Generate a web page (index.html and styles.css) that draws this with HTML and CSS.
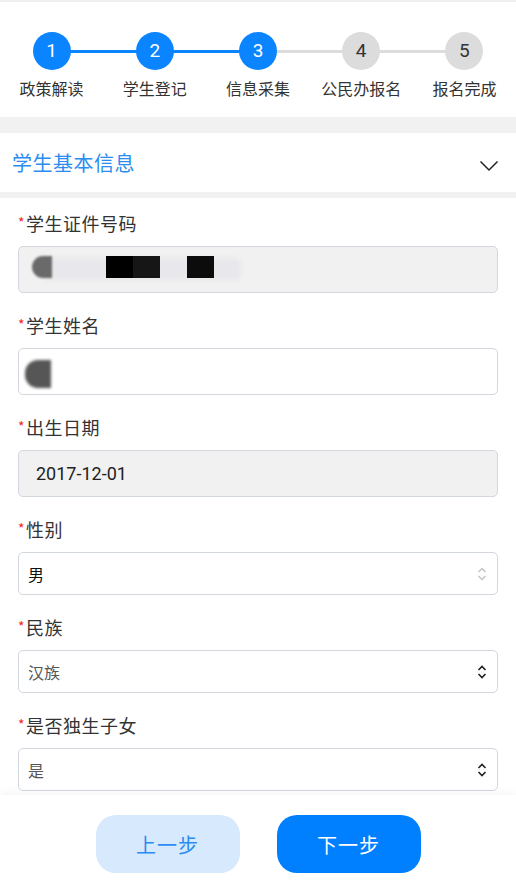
FILE: index.html
```html
<!DOCTYPE html>
<html lang="zh">
<head>
<meta charset="utf-8">
<link rel="stylesheet" href="styles.css">
</head>
<body>
<div class="page">
  <div class="topline"></div>
  <div class="steps">
    <div class="step done"><div class="track"><span class="bar right on"></span><span class="circle">1</span></div><div class="slabel">政策解读</div></div>
    <div class="step done"><div class="track"><span class="bar left on"></span><span class="bar right on"></span><span class="circle">2</span></div><div class="slabel">学生登记</div></div>
    <div class="step done"><div class="track"><span class="bar left on"></span><span class="bar right"></span><span class="circle">3</span></div><div class="slabel">信息采集</div></div>
    <div class="step"><div class="track"><span class="bar left"></span><span class="bar right"></span><span class="circle">4</span></div><div class="slabel">公民办报名</div></div>
    <div class="step"><div class="track"><span class="bar left"></span><span class="circle">5</span></div><div class="slabel">报名完成</div></div>
  </div>
  <div class="band"></div>
  <div class="section-head">
    <span class="section-title">学生基本信息</span>
    <svg class="chev" width="20" height="12" viewBox="0 0 20 12"><path d="M1.5 1.5 L10 10 L18.5 1.5" fill="none" stroke="#222" stroke-width="1.5"/></svg>
  </div>
  <div class="band thin"></div>
  <div class="form">
    <div class="field first">
      <div class="label"><span class="req">*</span>学生证件号码</div>
      <div class="input readonly">
        <span class="mask m5"></span><span class="mask m1"></span><span class="mask m2"></span><span class="mask m3"></span><span class="mask m4"></span>
      </div>
    </div>
    <div class="field">
      <div class="label"><span class="req">*</span>学生姓名</div>
      <div class="input"><span class="mask n1"></span></div>
    </div>
    <div class="field">
      <div class="label"><span class="req">*</span>出生日期</div>
      <div class="input readonly date">2017-12-01</div>
    </div>
    <div class="field">
      <div class="label"><span class="req">*</span>性别</div>
      <div class="select dark"><span>男</span>
        <svg class="arrows" width="10" height="14" viewBox="0 0 10 14"><path d="M1.5 5 L5 1.5 L8.5 5 M1.5 9 L5 12.5 L8.5 9" fill="none" stroke="#c4c4c4" stroke-width="1.5"/></svg>
      </div>
    </div>
    <div class="field">
      <div class="label"><span class="req">*</span>民族</div>
      <div class="select"><span>汉族</span>
        <svg class="arrows" width="10" height="14" viewBox="0 0 10 14"><path d="M1.5 5 L5 1.5 L8.5 5 M1.5 9 L5 12.5 L8.5 9" fill="none" stroke="#222" stroke-width="1.6"/></svg>
      </div>
    </div>
    <div class="field">
      <div class="label"><span class="req">*</span>是否独生子女</div>
      <div class="select"><span>是</span>
        <svg class="arrows" width="10" height="14" viewBox="0 0 10 14"><path d="M1.5 5 L5 1.5 L8.5 5 M1.5 9 L5 12.5 L8.5 9" fill="none" stroke="#222" stroke-width="1.6"/></svg>
      </div>
    </div>
  </div>
  <div class="footer">
    <button class="btn prev">上一步</button>
    <button class="btn next">下一步</button>
  </div>
</div>
</body>
</html>
```
FILE: styles.css
```css
* { box-sizing: border-box; }
html, body { margin: 0; padding: 0; }
body {
  font-family: "Noto Sans CJK SC", "Noto Sans", sans-serif;
  color: #333;
  background: #fff;
}
.page {
  height: 891px;
  display: flex;
  flex-direction: column;
  overflow: hidden;
}
.page > * { flex-shrink: 0; }
.topline { height: 2px; background: #f0f0f0; }
.steps {
  display: grid;
  grid-template-columns: repeat(5, 1fr);
  padding-top: 30px;
  height: 115px;
}
.step { display: flex; flex-direction: column; align-items: center; }
.track {
  position: relative;
  width: 100%;
  height: 38px;
  display: flex;
  justify-content: center;
}
.bar {
  position: absolute;
  top: 18px;
  height: 3px;
  width: 50%;
  background: #dcdcdc;
}
.bar.left { left: 0; }
.bar.right { right: 0; }
.bar.on { background: #0a84ff; }
.circle {
  position: relative;
  z-index: 1;
  width: 38px;
  height: 38px;
  border-radius: 50%;
  background: #dcdcdc;
  color: #333;
  font-family: "Roboto", "Liberation Sans", sans-serif;
  font-size: 19px;
  line-height: 38px;
  text-align: center;
}
.step.done .circle { background: #0a84ff; color: #fff; }
.slabel {
  margin-top: 7px;
  font-size: 16px;
  line-height: 22px;
  color: #333;
  white-space: nowrap;
}
.band { height: 16px; background: #f1f1f1; }
.band.thin { height: 6px; }
.section-head {
  height: 59px;
  display: flex;
  align-items: center;
  justify-content: space-between;
  padding: 0 17px 0 12px;
}
.section-title {
  font-size: 20px;
  color: #2b8df0;
  letter-spacing: 0.5px;
}
.chev { margin-top: 6px; }
.page > .form { flex: 1 1 auto; min-height: 0; overflow: hidden; padding: 0 18px; }
.field { padding-top: 20px; }
.field.first { padding-top: 13px; }
.label {
  font-size: 18px;
  line-height: 24px;
  height: 24px;
  margin-bottom: 11px;
  color: #333;
  letter-spacing: 0.5px;
}
.req { color: #f5222d; font-size: 14px; line-height: 0; position: relative; top: -3px; margin-right: 1px; }
.input {
  position: relative;
  height: 47px;
  border: 1px solid #d3d7de;
  border-radius: 5px;
  background: #fff;
  font-size: 18px;
  display: flex;
  align-items: center;
}
.input.readonly { background: #f1f1f1; }
.input.date { padding-left: 17px; color: #222; font-family: "Roboto", "Liberation Sans", sans-serif; }
.mask { position: absolute; top: 9px; height: 22px; }
.m5 { left: 22px; width: 200px; top: 11px; height: 22px; background: #e8e8ec; border-radius: 6px; filter: blur(2px); }
.m1 { left: 13px; width: 20px; background: #6a6a6a; border-radius: 11px 0 0 11px; filter: blur(1.2px); }
.m2 { left: 87px; width: 28px; background: #000; filter: blur(0.6px); }
.m3 { left: 114px; width: 27px; background: #161616; filter: blur(0.6px); }
.m4 { left: 168px; width: 27px; background: #0c0c0c; filter: blur(0.6px); }
.n1 { left: 6px; top: 11px; width: 26px; height: 28px; background: #565656; border-radius: 13px 0 0 13px; filter: blur(1.5px); }
.select {
  height: 43px;
  border: 1px solid #d3d7de;
  border-radius: 5px;
  background: #fff;
  display: flex;
  align-items: center;
  justify-content: space-between;
  padding: 0 10px 0 9px;
  font-size: 16px;
  color: #555;
}
.select.dark { color: #111; }
.footer {
  height: 96px;
  background: #fff;
  box-shadow: 0 -3px 8px rgba(0, 0, 0, 0.04);
  display: flex;
  justify-content: center;
  align-items: flex-start;
  gap: 37px;
  padding-top: 20px;
  position: relative;
}
.btn {
  width: 144px;
  height: 58px;
  border: none;
  border-radius: 20px;
  font-family: "Noto Sans CJK SC", sans-serif;
  font-size: 20px;
  letter-spacing: 1px;
}
.btn.prev { background: #d6e9fd; color: #2a8cf2; }
.btn.next { background: #0080ff; color: #fff; }
```
